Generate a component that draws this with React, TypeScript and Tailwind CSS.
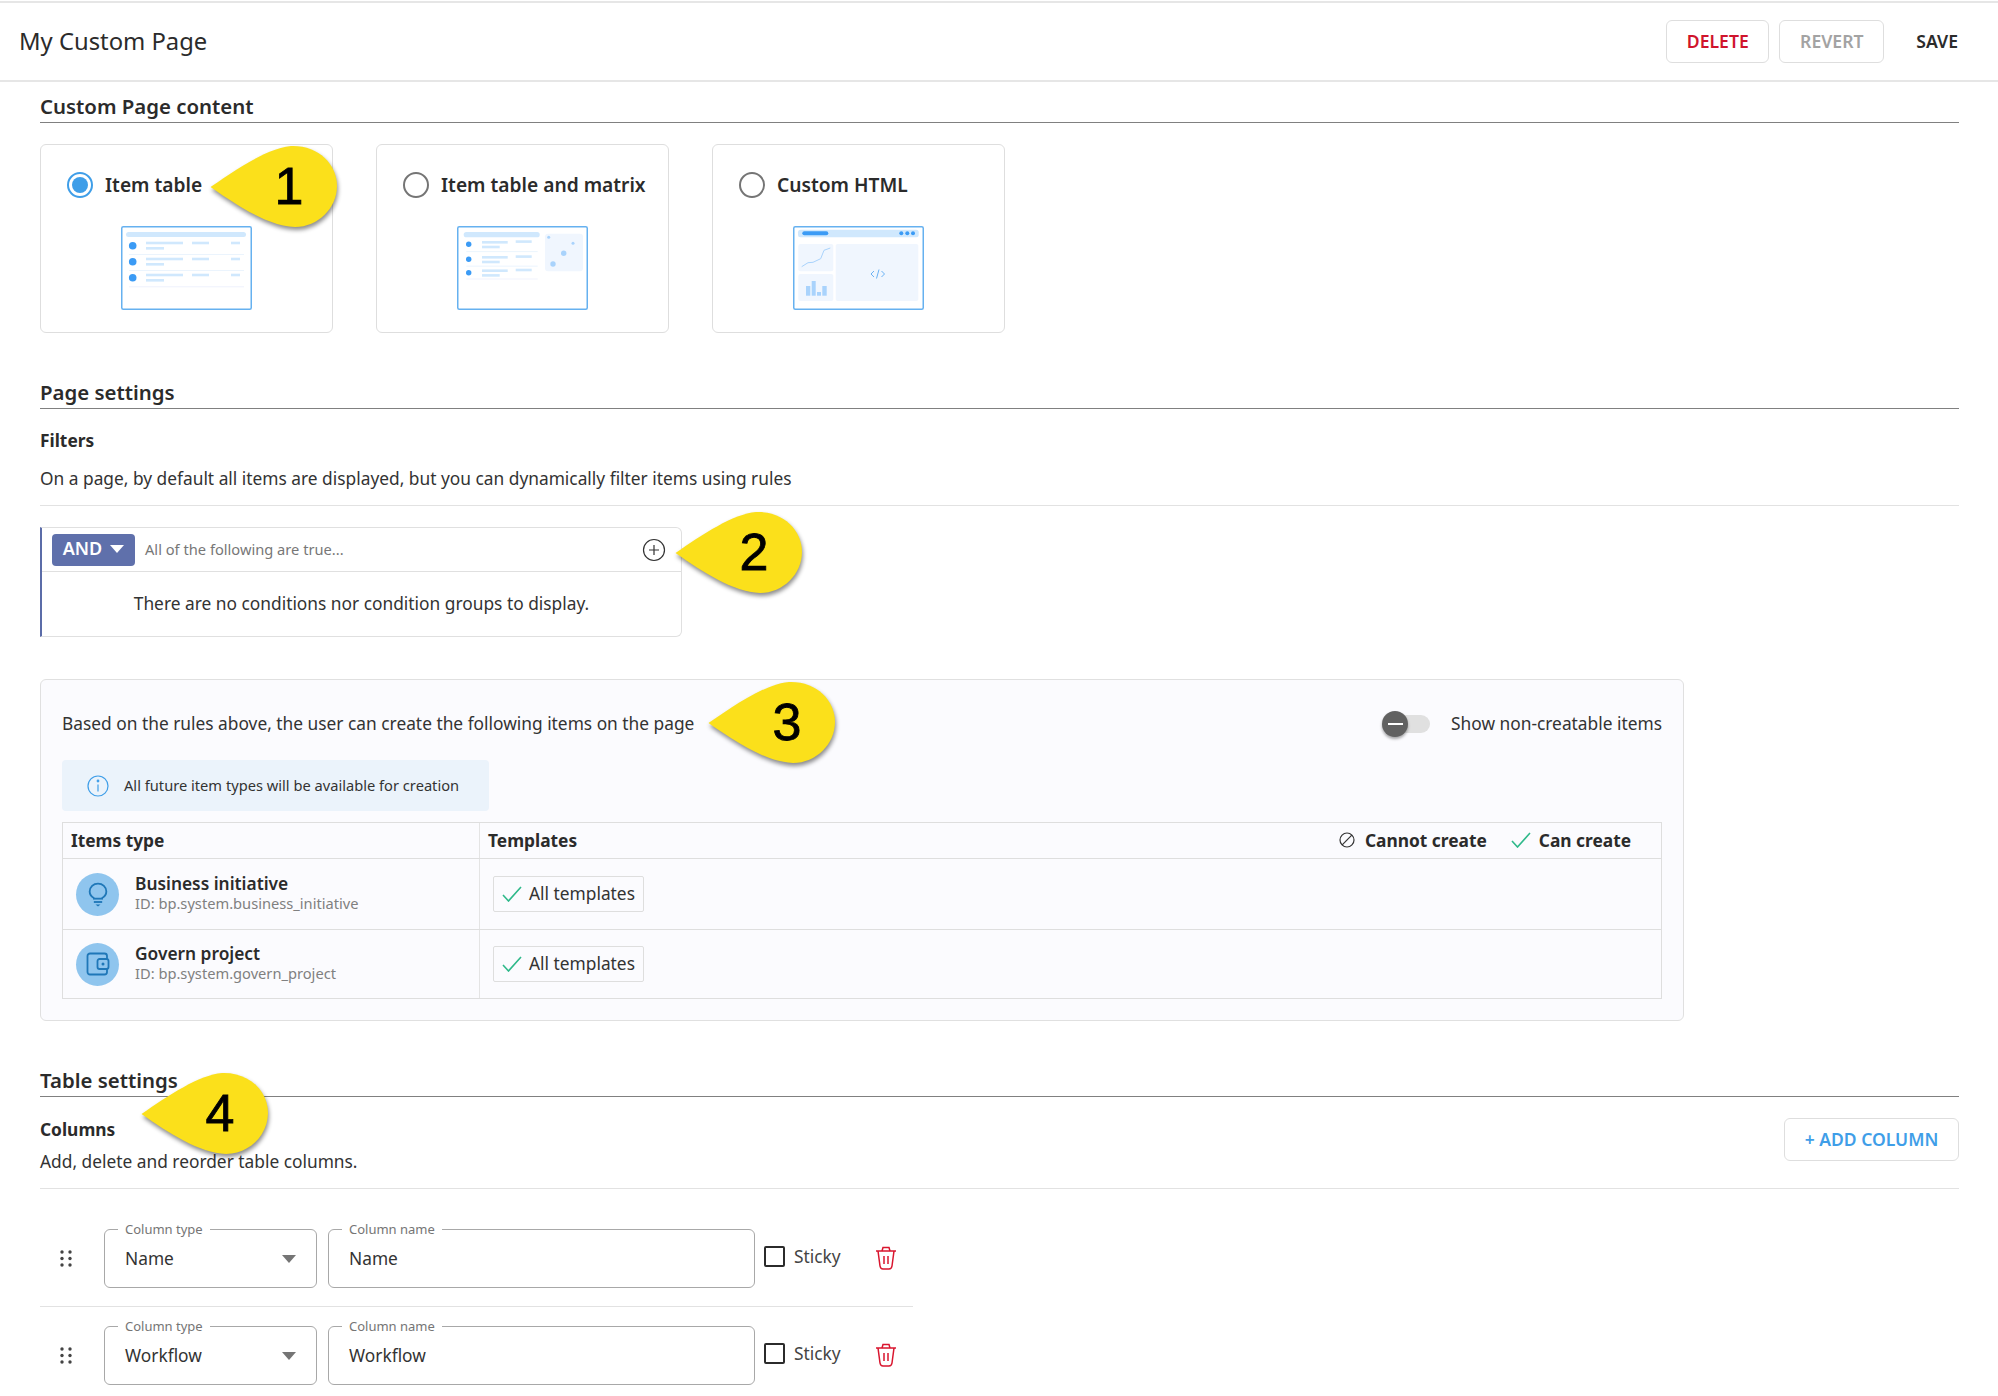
import React from "react";

const SectionTitle = ({ className, children }: { className: string; children: React.ReactNode }) => (
  <h2 className={`border-b border-[#808080] pb-[2px] text-[20.4px] font-semibold leading-[28px] text-[#2b2b2b] ${className}`}>
    {children}
  </h2>
);

const Callout = ({ className, n }: { className: string; n: string }) => (
  <div className={`absolute z-10 h-[81px] w-[124px] ${className}`}>
    <svg width="124" height="81" viewBox="0 0 124 81" className="overflow-visible drop-shadow-[1px_3px_2px_rgba(0,0,0,0.45)]">
      <path d="M-2.5 41 C25 22 55 2 78 0 C105 -1 124 18 124 40 C124 62 105 81 82 81 C55 80 25 60 -2.5 41 Z" fill="#fbe01b" />
    </svg>
    <span className="absolute left-[50px] top-[5px] w-[52px] text-center font-['Liberation_Sans',sans-serif] text-[52px] leading-[70px] text-black [-webkit-text-stroke:0.8px_black]">
      {n}
    </span>
  </div>
);

const Thumb1 = () => (
  <svg width="131" height="84" viewBox="0 0 131 84" className="self-center">
    <rect x="0.75" y="0.75" width="129.5" height="82.5" rx="1.5" fill="#fff" stroke="#66b1f0" strokeWidth="1.5" />
    <rect x="5" y="6" width="120" height="5" rx="2.5" fill="#d0e8fd" />
    {[0, 16, 32].map((d) => (
      <g key={d}>
        <circle cx="11.7" cy={19.7 + d} r="3.8" fill="#3b9bf5" />
        <rect x="25" y={15.7 + d} width="37" height="2.6" fill="#d0e8fd" />
        <rect x="25" y={21 + d} width="18" height="2.6" fill="#d0e8fd" />
        <rect x="71" y={15.7 + d} width="17" height="2.6" fill="#d0e8fd" />
        <rect x="110" y={15.7 + d} width="9" height="2.6" fill="#d0e8fd" />
      </g>
    ))}
    <rect x="8" y="28" width="115" height="0.8" fill="#e6f2fd" />
    <rect x="8" y="44" width="115" height="0.8" fill="#e6f2fd" />
    <rect x="8" y="60" width="115" height="1.4" fill="#f3f5fd" />
  </svg>
);

const Thumb2 = () => (
  <svg width="131" height="84" viewBox="0 0 131 84" className="self-center">
    <rect x="0.75" y="0.75" width="129.5" height="82.5" rx="1.5" fill="#fff" stroke="#66b1f0" strokeWidth="1.5" />
    <rect x="6.7" y="6" width="76" height="5.3" rx="2.6" fill="#d0e8fd" />
    {[0, 15, 28.4].map((d) => (
      <g key={d}>
        <circle cx="11.7" cy={18.3 + d} r="2.7" fill="#3b9bf5" />
        <rect x="25" y={15 + d} width="25.7" height="2.6" fill="#d0e8fd" />
        <rect x="25" y={19.7 + d} width="17.7" height="2.6" fill="#d0e8fd" />
        <rect x="58.7" y={14.3 + d} width="16" height="2.6" fill="#d0e8fd" />
      </g>
    ))}
    <rect x="9.3" y="25.3" width="71.4" height="0.8" fill="#e6f2fd" />
    <rect x="9.3" y="39.7" width="71.4" height="0.8" fill="#e6f2fd" />
    <rect x="9.3" y="52.4" width="71.4" height="1.2" fill="#f3f5fd" />
    <rect x="88" y="7.7" width="38" height="37.6" rx="3" fill="#f0f6fe" />
    <circle cx="91.7" cy="11.3" r="1.5" fill="#a9d3fc" />
    <circle cx="116" cy="17.3" r="1.5" fill="#a9d3fc" />
    <circle cx="106.7" cy="27.3" r="2.7" fill="#a9d3fc" />
    <circle cx="96" cy="38" r="2.7" fill="#a9d3fc" />
  </svg>
);

const Thumb3 = () => (
  <svg width="131" height="84" viewBox="0 0 131 84" className="self-center">
    <rect x="0.75" y="0.75" width="129.5" height="82.5" rx="1.5" fill="#fff" stroke="#66b1f0" strokeWidth="1.5" />
    <rect x="5" y="3.7" width="120.7" height="7.6" rx="2.5" fill="#d0e8fd" />
    <rect x="9.3" y="5.3" width="26" height="4" rx="2" fill="#3b9bf5" />
    <circle cx="108.3" cy="7.3" r="2" fill="#3b9bf5" />
    <circle cx="114.3" cy="7.3" r="2" fill="#3b9bf5" />
    <circle cx="120" cy="7.3" r="2" fill="#3b9bf5" />
    <rect x="5.3" y="18" width="35" height="27.3" rx="2" fill="#f0f6fe" />
    <rect x="5.3" y="48" width="35" height="27" rx="2" fill="#f0f6fe" />
    <rect x="42.7" y="18" width="82.6" height="57" rx="2" fill="#f0f6fe" />
    <polyline points="8.7,40.7 15,36.7 20,36.3 27.7,32.7 31,24.3 37.3,22" fill="none" stroke="#a9d3fc" strokeWidth="1" />
    <rect x="13" y="60" width="4.3" height="9.7" fill="#a9d3fc" />
    <rect x="18.7" y="55" width="4" height="14.7" fill="#a9d3fc" />
    <rect x="24" y="66" width="4" height="3.7" fill="#a9d3fc" />
    <rect x="29.3" y="60" width="4.4" height="9.7" fill="#a9d3fc" />
    <path d="M81 45 L78 48 L81 51 M88.5 45 L91.5 48 L88.5 51 M86 43.5 L83.5 52.5" fill="none" stroke="#5aa9f2" strokeWidth="0.9" />
  </svg>
);

const Radio = ({ checked }: { checked?: boolean }) => (
  <span className={`flex h-[26px] w-[26px] items-center justify-center rounded-full border-2 ${checked ? "border-[#3f9ee8]" : "border-[#757575]"}`}>
    {checked && <span className="h-[16px] w-[16px] rounded-full bg-[#3f9ee8]" />}
  </span>
);

const TypeCard = ({ label, checked, thumb }: { label: string; checked?: boolean; thumb: React.ReactNode }) => (
  <div className="flex h-[189px] w-[293px] flex-col rounded-[6px] border border-[#dedede] pt-[27px]">
    <div className="flex h-[26px] items-center gap-[12px] pl-[26px]">
      <Radio checked={checked} />
      <span className="text-[19.2px] font-semibold text-[#2b2b2b]">{label}</span>
    </div>
    <div className="mt-[28px] flex justify-center">{thumb}</div>
  </div>
);

const Check = () => (
  <svg width="20" height="16" viewBox="0 0 20 16" fill="none" stroke="#2fb98a" strokeWidth="1.6">
    <polyline points="1,9 6.5,15 19,1" />
  </svg>
);

const BulbIcon = () => (
  <svg width="20" height="25" viewBox="0 0 24 30" fill="none" stroke="#1f77b8" strokeWidth="2.2">
    <path d="M7.5 19.5 C3.5 17.5 2 14.5 2 11.5 C2 6 6.5 2 12 2 C17.5 2 22 6 22 11.5 C22 14.5 20.5 17.5 16.5 19.5" />
    <line x1="6" y1="20" x2="18" y2="20" />
    <line x1="7" y1="24" x2="17" y2="24" />
    <path d="M9 27 L15 27 L12 29.5 Z" fill="#1f77b8" stroke="none" />
  </svg>
);

const WalletIcon = () => (
  <svg width="24" height="24" viewBox="0 0 24 24" fill="none" stroke="#1f77b8" strokeWidth="1.8">
    <rect x="1.5" y="1.5" width="19.5" height="21" rx="2.5" />
    <rect x="11.5" y="7" width="11" height="10" rx="2" fill="#8fc5ee" />
    <circle cx="17" cy="12" r="1.5" fill="#1f77b8" stroke="none" />
  </svg>
);

const ItemRow = ({ name, id, icon, className }: { name: string; id: string; icon: React.ReactNode; className: string }) => (
  <div className={`grid grid-cols-[417px_1fr] border-t border-[#dedede] ${className}`}>
    <div className="flex items-center border-r border-[#e4e4e4] pl-[13px]">
      <span className="flex h-[43px] w-[43px] items-center justify-center rounded-full bg-[#8fc5ee]">{icon}</span>
      <div className="mb-[3px] ml-[16px]">
        <div className="text-[17.33px] font-semibold leading-[22px] text-[#2b2b2b]">{name}</div>
        <div className="text-[14.67px] leading-[19px] text-[#808080]">{id}</div>
      </div>
    </div>
    <div className="flex items-center pl-[13px]">
      <div className="flex h-[36px] w-[151px] items-center gap-[7px] rounded-[2px] border border-[#dedede] pl-[8px] text-[17.33px] text-[#333]">
        <Check />
        All templates
      </div>
    </div>
  </div>
);

const Caret = ({ color }: { color: string }) => (
  <svg width="14" height="8" viewBox="0 0 14 8">
    <path d="M0 0 L14 0 L7 8 Z" fill={color} />
  </svg>
);

const Grip = () => (
  <svg width="12" height="18" viewBox="0 0 12 18" fill="#444">
    {[2, 8.5, 15].map((y) => (
      <g key={y}>
        <circle cx="2" cy={y} r="1.7" />
        <circle cx="10" cy={y} r="1.7" />
      </g>
    ))}
  </svg>
);

const Trash = () => (
  <svg width="24" height="24" viewBox="0 0 24 24" fill="none" stroke="#d9152e" strokeWidth="1.5">
    <line x1="2" y1="5" x2="22" y2="5" />
    <path d="M8 5 L9 1.5 L15 1.5 L16 5" />
    <path d="M4 5 L6 20 C6.3 22 7.5 23 9 23 L15 23 C16.5 23 17.7 22 18 20 L20 5" />
    <line x1="10" y1="10" x2="10" y2="18" />
    <line x1="14" y1="10" x2="14" y2="18" />
  </svg>
);

const Outlined = ({ label, className, children }: { label: string; className: string; children: React.ReactNode }) => (
  <fieldset className={`h-[68px] rounded-[6px] border border-[#a8a8a8] ${className}`}>
    <legend className="ml-[13px] px-[7px] text-[13px] leading-[18px] text-[#757575]">{label}</legend>
    <div className="flex h-[42px] items-center justify-between pl-[20px] pr-[20px] text-[17.33px] text-[#333]">{children}</div>
  </fieldset>
);

const ColumnRow = ({ value, className }: { value: string; className: string }) => (
  <div className={`flex w-[873px] items-start pb-[18px] pt-[10px] ${className}`}>
    <span className="ml-[20px] mr-[32px] mt-[30px] flex">
      <Grip />
    </span>
    <Outlined label="Column type" className="w-[213px]">
      {value}
      <Caret color="#757575" />
    </Outlined>
    <Outlined label="Column name" className="ml-[11px] w-[427px]">
      {value}
    </Outlined>
    <span className="ml-[9px] mt-[26px] h-[21px] w-[21px] rounded-[2px] border-2 border-[#2b2b2b]" />
    <span className="ml-[9px] mt-[23px] text-[17.33px] leading-[26px] text-[#444]">Sticky</span>
    <span className="ml-[33px] mt-[26px] flex">
      <Trash />
    </span>
  </div>
);

export default function App() {
  return (
    <div className="relative h-[1396px] w-[1998px] overflow-hidden bg-white font-['Noto_Sans',sans-serif] text-[#333]">
      <header className="mt-px flex h-[81px] items-center justify-between border-b-2 border-t-2 border-[#e6e6e6] pl-[19px] pr-[40px]">
        <h1 className="text-[23.8px] text-[#2b2b2b]">My Custom Page</h1>
        <div className="flex items-center text-[17.6px] font-semibold">
          <button className="h-[43px] w-[103px] rounded-[6px] border border-[#dedede] text-[#d0142c]">DELETE</button>
          <button className="ml-[10px] h-[43px] w-[105px] rounded-[6px] border border-[#dedede] text-[#a3a3a3]">REVERT</button>
          <button className="ml-[32px] text-[#2b2b2b]">SAVE</button>
        </div>
      </header>

      <main className="pl-[40px] pr-[39px]">
        <SectionTitle className="mt-[10px]">Custom Page content</SectionTitle>
        <div className="mt-[21px] flex gap-[43px]">
          <TypeCard label="Item table" checked thumb={<Thumb1 />} />
          <TypeCard label="Item table and matrix" thumb={<Thumb2 />} />
          <TypeCard label="Custom HTML" thumb={<Thumb3 />} />
        </div>

        <SectionTitle className="mt-[45px]">Page settings</SectionTitle>
        <div className="mt-[19px] text-[17.33px] font-bold leading-[24px] text-[#2b2b2b]">Filters</div>
        <p className="mt-[14px] border-b border-[#e2e2e2] pb-[15px] text-[17.33px] leading-[24px]">
          On a page, by default all items are displayed, but you can dynamically filter items using rules
        </p>

        <div className="mt-[21px] flex h-[110px] w-[642px] flex-col rounded-r-[6px] border border-l-2 border-[#e0e0e0] border-l-[#5b6ca8]">
          <div className="flex h-[44px] shrink-0 items-center border-b border-[#e0e0e0] pl-[10px] pr-[10px]">
            <button className="flex h-[32px] w-[83px] items-center justify-center gap-[8px] rounded-[4px] bg-[#5f70ab] pb-[2px] text-[18px] font-semibold text-white">
              AND
              <Caret color="#ffffff" />
            </button>
            <span className="mb-[2px] ml-[10px] flex-1 text-[14.67px] text-[#777]">All of the following are true...</span>
            <svg width="24" height="24" viewBox="0 0 24 24" fill="none" stroke="#333" strokeWidth="1.2" className="mr-[5px]">
              <circle cx="12" cy="12" r="10.5" />
              <path d="M12 7 L12 17 M7 12 L17 12" />
            </svg>
          </div>
          <div className="flex flex-1 items-center justify-center text-[17.33px]">
            There are no conditions nor condition groups to display.
          </div>
        </div>

        <section className="mt-[42px] h-[342px] w-[1644px] rounded-[6px] border border-[#e0e0e0] bg-[#fbfbfe] pl-[21px] pr-[21px] pt-[30px]">
          <div className="flex h-[28px] items-center justify-between">
            <span className="text-[17.33px]">Based on the rules above, the user can create the following items on the page</span>
            <div className="flex items-center gap-[21px]">
              <div className="relative flex h-[26px] w-[48px] items-center">
                <span className="ml-[11px] h-[18px] w-[37px] rounded-full bg-[#e0e0e0]" />
                <span className="absolute left-0 top-0 flex h-[26px] w-[26px] items-center justify-center rounded-full bg-[#616161] shadow-[0_2px_3px_rgba(0,0,0,0.35)]">
                  <span className="h-[2px] w-[15px] bg-white" />
                </span>
              </div>
              <span className="text-[17.33px]">Show non-creatable items</span>
            </div>
          </div>

          <div className="mt-[22px] flex h-[51px] w-[427px] items-center rounded-[4px] bg-[#ebf3fb] pl-[25px]">
            <svg width="22" height="22" viewBox="0 0 22 22" fill="none" stroke="#3f9ee8" strokeWidth="1.2">
              <circle cx="11" cy="11" r="10" />
              <line x1="11" y1="9.5" x2="11" y2="16.5" />
              <circle cx="11" cy="6" r="0.8" fill="#3f9ee8" />
            </svg>
            <span className="mb-[2px] ml-[15px] text-[14.67px]">All future item types will be available for creation</span>
          </div>

          <div className="mt-[11px] w-[1600px] border border-[#dedede]">
            <div className="grid h-[35px] grid-cols-[417px_1fr]">
              <div className="flex items-center border-r border-[#e4e4e4] pl-[8px] text-[17.33px] font-bold text-[#2b2b2b]">Items type</div>
              <div className="flex items-center justify-between pl-[8px] pr-[30px] text-[17.33px] font-bold text-[#2b2b2b]">
                Templates
                <div className="flex items-center">
                  <svg width="16" height="16" viewBox="0 0 16 16" fill="none" stroke="#333" strokeWidth="1.2">
                    <circle cx="8" cy="8" r="7" />
                    <line x1="3.2" y1="12.8" x2="12.8" y2="3.2" />
                  </svg>
                  <span className="ml-[10px]">Cannot create</span>
                  <span className="ml-[24px] flex">
                    <Check />
                  </span>
                  <span className="ml-[8px]">Can create</span>
                </div>
              </div>
            </div>
            <ItemRow name="Business initiative" id="ID: bp.system.business_initiative" icon={<BulbIcon />} className="h-[71px]" />
            <ItemRow name="Govern project" id="ID: bp.system.govern_project" icon={<WalletIcon />} className="h-[69px]" />
          </div>
        </section>

        <SectionTitle className="mt-[45px]">Table settings</SectionTitle>
        <div className="flex items-start justify-between border-b border-[#e2e2e2] pb-[15px]">
          <div>
            <div className="mt-[20px] text-[17.33px] font-bold leading-[24px] text-[#2b2b2b]">Columns</div>
            <p className="mt-[8px] text-[17.33px] leading-[24px]">Add, delete and reorder table columns.</p>
          </div>
          <button className="mt-[21px] h-[43px] w-[175px] rounded-[6px] border border-[#dedede] text-[17.5px] font-semibold text-[#3f9ee8]">
            + ADD COLUMN
          </button>
        </div>

        <div className="mt-[21px]">
          <ColumnRow value="Name" className="border-b border-[#e2e2e2]" />
          <ColumnRow value="Workflow" className="" />
        </div>
      </main>

      <Callout className="left-[213px] top-[146px]" n="1" />
      <Callout className="left-[678px] top-[512px]" n="2" />
      <Callout className="left-[711px] top-[682px]" n="3" />
      <Callout className="left-[144px] top-[1073px]" n="4" />
    </div>
  );
}
